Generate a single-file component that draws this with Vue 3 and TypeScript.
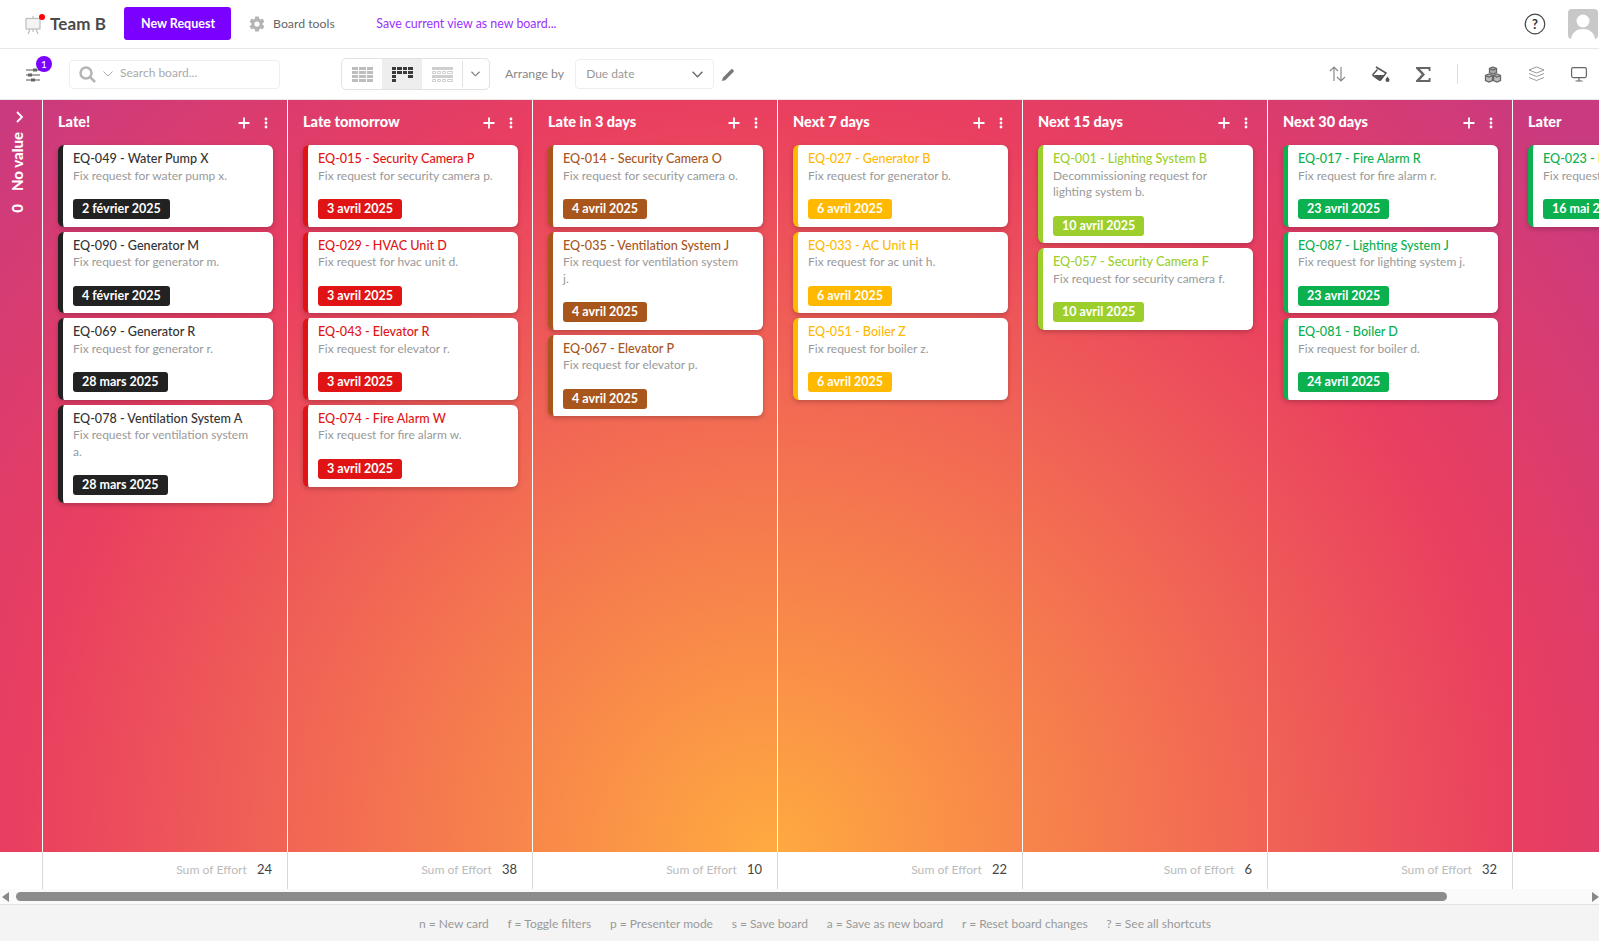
<script setup lang="ts">
interface Card { id: string; desc: string; date: string }
interface Column { title: string; tone: string; sum: number | null; cards: Card[] }

const columns: Column[] = [
  { title: 'Late!', tone: 'black', sum: 24, cards: [
    { id: 'EQ-049 - Water Pump X', desc: 'Fix request for water pump x.', date: '2 février 2025' },
    { id: 'EQ-090 - Generator M', desc: 'Fix request for generator m.', date: '4 février 2025' },
    { id: 'EQ-069 - Generator R', desc: 'Fix request for generator r.', date: '28 mars 2025' },
    { id: 'EQ-078 - Ventilation System A', desc: 'Fix request for ventilation system a.', date: '28 mars 2025' },
  ] },
  { title: 'Late tomorrow', tone: 'red', sum: 38, cards: [
    { id: 'EQ-015 - Security Camera P', desc: 'Fix request for security camera p.', date: '3 avril 2025' },
    { id: 'EQ-029 - HVAC Unit D', desc: 'Fix request for hvac unit d.', date: '3 avril 2025' },
    { id: 'EQ-043 - Elevator R', desc: 'Fix request for elevator r.', date: '3 avril 2025' },
    { id: 'EQ-074 - Fire Alarm W', desc: 'Fix request for fire alarm w.', date: '3 avril 2025' },
  ] },
  { title: 'Late in 3 days', tone: 'brown', sum: 10, cards: [
    { id: 'EQ-014 - Security Camera O', desc: 'Fix request for security camera o.', date: '4 avril 2025' },
    { id: 'EQ-035 - Ventilation System J', desc: 'Fix request for ventilation system j.', date: '4 avril 2025' },
    { id: 'EQ-067 - Elevator P', desc: 'Fix request for elevator p.', date: '4 avril 2025' },
  ] },
  { title: 'Next 7 days', tone: 'yellow', sum: 22, cards: [
    { id: 'EQ-027 - Generator B', desc: 'Fix request for generator b.', date: '6 avril 2025' },
    { id: 'EQ-033 - AC Unit H', desc: 'Fix request for ac unit h.', date: '6 avril 2025' },
    { id: 'EQ-051 - Boiler Z', desc: 'Fix request for boiler z.', date: '6 avril 2025' },
  ] },
  { title: 'Next 15 days', tone: 'lime', sum: 6, cards: [
    { id: 'EQ-001 - Lighting System B', desc: 'Decommissioning request for lighting system b.', date: '10 avril 2025' },
    { id: 'EQ-057 - Security Camera F', desc: 'Fix request for security camera f.', date: '10 avril 2025' },
  ] },
  { title: 'Next 30 days', tone: 'green', sum: 32, cards: [
    { id: 'EQ-017 - Fire Alarm R', desc: 'Fix request for fire alarm r.', date: '23 avril 2025' },
    { id: 'EQ-087 - Lighting System J', desc: 'Fix request for lighting system j.', date: '23 avril 2025' },
    { id: 'EQ-081 - Boiler D', desc: 'Fix request for boiler d.', date: '24 avril 2025' },
  ] },
  { title: 'Later', tone: 'green', sum: null, cards: [
    { id: 'EQ-023 - Lighting System', desc: 'Fix request for lighting system.', date: '16 mai 2025' },
  ] },
]

const shortcuts = [
  'n = New card', 'f = Toggle filters', 'p = Presenter mode', 's = Save board',
  'a = Save as new board', 'r = Reset board changes', '? = See all shortcuts',
]
</script>

<template>
  <div class="app">
    <header class="topbar">
      <svg class="logo" width="18" height="20" viewBox="0 0 18 20" fill="none" stroke="#bdbdbd" stroke-width="1.2">
        <rect x="1" y="3.5" width="14" height="10.5" fill="#f4f4f4" />
        <path d="M8 1v2.5M5 14l-2 5M11 14l2 5M8 14v3" />
      </svg>
      <span class="dot"></span>
      <span class="team">Team B</span>
      <button class="primary">New Request</button>
      <svg class="gear" width="18" height="18" viewBox="0 0 24 24" fill="#b4b4b4">
        <path d="M19.4 13a7.6 7.6 0 0 0 0-2l2.5-1.9-2.4-4.2-3 1.2a7.6 7.6 0 0 0-1.7-1L14.400 1.900H9.600L9.200 5.100a7.600 7.600 0 0 0-1.700 1l-3-1.200-2.400 4.200L4.600 11a7.600 7.600 0 0 0 0 2l-2.500 1.900 2.400 4.200 3-1.200a7.600 7.600 0 0 0 1.700 1l.4 3.200h4.800l.4-3.200a7.600 7.600 0 0 0 1.700-1l3 1.200 2.400-4.200zM12 15.500a3.500 3.500 0 1 1 0-7 3.500 3.500 0 0 1 0 7z" />
      </svg>
      <span class="tools">Board tools</span>
      <a class="save">Save current view as new board...</a>
      <span class="spacer"></span>
      <svg class="help" width="22" height="22" viewBox="0 0 22 22">
        <circle cx="11" cy="11" r="9.800" fill="none" stroke="#444" stroke-width="1.200" />
        <text x="11" y="15.500" text-anchor="middle" class="help-q">?</text>
      </svg>
      <div class="avatar">
        <svg width="30" height="30" viewBox="0 0 30 30" fill="#fff">
          <circle cx="15" cy="12" r="6.500" />
          <path d="M3 30c1-7 6-10 12-10s11 3 12 10z" />
        </svg>
      </div>
    </header>

    <div class="toolbar">
      <div class="filter">
        <svg width="16" height="16" viewBox="0 0 16 16" stroke="#555" stroke-width="1.200">
          <path d="M1 3h14M1 8h14M1 13h14" />
          <path d="M8 3h4M3 8h4M6 13h4" stroke-width="3" stroke="#666" />
        </svg>
        <span class="count">1</span>
      </div>
      <div class="search">
        <svg width="17" height="17" viewBox="0 0 17 17" fill="none" stroke="#b5b5b5" stroke-width="2.500">
          <circle cx="7" cy="7" r="5.500" />
          <path d="M11 11l5 5" />
        </svg>
        <svg class="chev" width="10" height="6" viewBox="0 0 10 6" fill="none" stroke="#aaa" stroke-width="1"><path d="M.500 .500L5 5l4.500-4.500" /></svg>
        <span class="search-text">Search board...</span>
      </div>
      <div class="views">
        <div class="view">
          <svg width="21" height="15" viewBox="0 0 21 15" fill="#bdbdbd"><path d="M0 0h6v3H0zM7 0h7v3H7zM15 0h6v3h-6zM0 4h6v3H0zM7 4h7v3H7zM15 4h6v3h-6zM0 8h6v3H0zM7 8h7v3H7zM15 8h6v3h-6zM0 12h6v3H0zM7 12h7v3H7zM15 12h6v3h-6z" /></svg>
        </div>
        <div class="view active">
          <svg width="21" height="15" viewBox="0 0 21 15" fill="#3a3a3a"><path d="M0 0h4v3H0zM5 0h5v3H5zM11 0h4v3h-4zM16 0h5v3h-5zM0 4h4v3H0zM5 4h5v3H5zM11 4h4v3h-4zM16 4h5v3h-5zM0 8h4v3H0zM16 8h5v3h-5zM0 12h4v3H0z" /></svg>
        </div>
        <div class="view">
          <svg width="21" height="15" viewBox="0 0 21 15" fill="#cfcfcf"><path d="M0 0h21v3H0zM0 8h21v3H0z" /><path d="M.500 4.500h3v2h-3zM5.500 4.500h3v2h-3zM10.500 4.500h3v2h-3zM15.500 4.500h5v2h-5zM.500 12.500h3v2h-3zM5.500 12.500h3v2h-3zM10.500 12.500h3v2h-3zM15.500 12.500h5v2h-5z" fill="none" stroke="#cfcfcf" stroke-width="1" /></svg>
        </div>
        <div class="view-more">
          <svg width="9" height="6" viewBox="0 0 10 6" fill="none" stroke="#777" stroke-width="1.200"><path d="M.500 .500L5 5l4.500-4.500" /></svg>
        </div>
      </div>
      <span class="arrange lift">Arrange by</span>
      <div class="select">
        <span class="lift">Due date</span>
        <svg width="11" height="7" viewBox="0 0 10 6" fill="none" stroke="#666" stroke-width="1.200"><path d="M.500 .500L5 5l4.500-4.500" /></svg>
      </div>
      <svg class="pencil" width="13" height="13" viewBox="0 0 13 13" fill="#777"><path d="M0 13l.800-3.200L9 1.600a1.300 1.300 0 0 1 1.900 0l.5.500a1.300 1.300 0 0 1 0 1.900L3.200 12.200z" /></svg>
      <span class="spacer"></span>
      <div class="tool-icons">
        <svg width="17" height="16" viewBox="0 0 17 16" fill="none" stroke="#8a8a8a" stroke-width="1.200"><path d="M5 15V1M1 5l4-4 4 4M12 1v14M8 11l4 4 4-4" /></svg>
        <svg width="18" height="16" viewBox="0 0 18 16"><path d="M4 1l10 6-5 6.500a1.500 1.500 0 0 1-2 .3L1.500 10a1.500 1.500 0 0 1-.2-2L5.500 3.500" fill="none" stroke="#555" stroke-width="1.500" /><path d="M1.500 9h11.500l-4 5-2 .3z" fill="#555" /><path d="M15.500 10.500c1.300 1.700 2 2.600 2 3.500a2 2 0 0 1-4 0c0-.9.700-1.800 2-3.500z" fill="#555" /></svg>
        <svg width="15" height="15" viewBox="0 0 15 15" fill="#666"><path d="M0 0h14.500v4h-1.500l-.7-2H4l5 5.500-5 5.500h8.300l.7-2h1.500v4H0v-1.500L5.700 7.500 0 1.500z" /></svg>
        <span class="vr"></span>
        <svg width="18" height="17" viewBox="0 0 18 17" stroke="#666" stroke-width="1.300" fill="#aaa"><path d="M9 1l3.500 1.500v4L9 8 5.500 6.500v-4z" /><path d="M5 8l3.500 1.500v5L5 16l-3.500-1.500v-5z" fill="#bbb" /><path d="M13 8l3.500 1.500v5L13 16l-3.500-1.500v-5z" fill="#bbb" /><path d="M5.500 2.500L9 4l3.500-1.500M1.500 9.500L5 11l3.500-1.500M9.500 9.500L13 11l3.500-1.500" fill="none" /></svg>
        <svg width="17" height="16" viewBox="0 0 17 16" fill="none" stroke="#999" stroke-width="1"><path d="M8.500 1l7.500 3-7.500 3L1 4zM1 7.500l7.500 3 7.500-3M1 11.500l7.500 3 7.500-3" /></svg>
        <svg width="16" height="15" viewBox="0 0 16 15" fill="none" stroke="#666" stroke-width="1.200"><rect x=".600" y=".600" width="14.800" height="10" rx="1.500" /><path d="M8 10.600v3M4.500 14h7" /></svg>
      </div>
    </div>

    <main class="board">
      <aside class="novalue">
        <div class="nv-top">
          <svg width="8" height="12" viewBox="0 0 8 12" fill="none" stroke="#fff" stroke-width="1.800"><path d="M1 1l5 5-5 5" /></svg>
          <span class="nv-label"><span class="nv-count">0</span>No value</span>
        </div>
        <div class="nv-foot"></div>
      </aside>
      <section v-for="col in columns" :key="col.title" class="column">
        <div class="col-body">
          <div class="col-head">
            <span class="col-title">{{ col.title }}</span>
            <svg width="12" height="12" viewBox="0 0 12 12" stroke="#fff" stroke-width="1.800"><path d="M6 .500v11M.500 6h11" /></svg>
            <svg class="kebab" width="4" height="12" viewBox="0 0 4 12" fill="#fff"><circle cx="2" cy="2" r="1.400" /><circle cx="2" cy="6" r="1.400" /><circle cx="2" cy="10" r="1.400" /></svg>
          </div>
          <article v-for="card in col.cards" :key="card.id" class="card" :class="col.tone">
            <div class="card-title">{{ card.id }}</div>
            <div class="card-desc">{{ card.desc }}</div>
            <span class="badge">{{ card.date }}</span>
          </article>
        </div>
        <footer class="col-foot">
          <template v-if="col.sum !== null">
            <span class="sum-label">Sum of Effort</span>
            <span class="sum-value">{{ col.sum }}</span>
          </template>
        </footer>
      </section>
    </main>

    <div class="scrollbar">
      <span class="arrow left"></span>
      <span class="track"><span class="thumb"></span></span>
      <span class="arrow right"></span>
    </div>

    <footer class="shortcuts">
      <span v-for="s in shortcuts" :key="s">{{ s }}</span>
    </footer>
  </div>
</template>

<style>
html, body { margin: 0; overflow: hidden; }
</style>

<style scoped>
.app {
  height: 941px;
  width: 1599px;
  display: flex;
  flex-direction: column;
  font-family: "Lato", "Open Sans", sans-serif;
  color: #444;
  background: #fff;
  overflow: hidden;
}
.spacer { flex: 1; }
.lift { padding-bottom: 2px; }

.topbar {
  height: 48px;
  flex: none;
  display: flex;
  align-items: center;
  border-bottom: 1px solid #e8e8e8;
  position: relative;
}
.logo { margin-left: 25px; margin-top: 2px; }
.dot {
  position: absolute;
  left: 39px;
  top: 14px;
  width: 6px;
  height: 6px;
  border-radius: 50%;
  background: #f00;
}
.team { margin-left: 7px; padding-bottom: 2px; font-size: 17px; font-weight: 700; color: #4a4a4a; letter-spacing: .1px; }
.primary {
  margin-left: 18px;
  margin-bottom: 2px;
  width: 107px;
  height: 33px;
  border: 0;
  border-radius: 3px;
  background: #7a00ff;
  color: #fff;
  font: 700 12.500px "Lato", sans-serif;
  padding: 0 0 0 1px;
}
.gear { margin-left: 17px; }
.tools { margin-left: 7px; font-size: 12.300px; color: #666; padding-bottom: 2px; }
.save { margin-left: 41.500px; font-size: 12.400px; color: #9a30ff; padding-bottom: 2px; }
.help { margin-right: 22px; }
.help-q { font: 700 13px "Lato", sans-serif; fill: #333; }
.avatar {
  width: 30px;
  height: 30px;
  margin-right: 1px;
  background: #c8c8c8;
  border-radius: 4px;
  overflow: hidden;
}
.avatar svg { display: block; }

.toolbar {
  height: 51px;
  flex: none;
  display: flex;
  align-items: center;
  box-sizing: border-box;
  border-bottom: 1px solid #e8e8e8;
}
.filter { margin-left: 25px; position: relative; width: 16px; height: 16px; margin-top: 2px; }
.count {
  position: absolute;
  left: 11px;
  top: -11px;
  width: 16px;
  height: 16px;
  border-radius: 50%;
  background: #7a00ff;
  color: #fff;
  font-size: 10px;
  line-height: 16px;
  text-align: center;
}
.search {
  margin-left: 28px;
  width: 211px;
  height: 29px;
  box-sizing: border-box;
  border: 1px solid #eee;
  border-radius: 4px;
  display: flex;
  align-items: center;
  padding-left: 9px;
  font-size: 12px;
  color: #aaa;
}
.search-text { padding-bottom: 3px; }
.chev { margin: 0 7px 0 7px; }
.views {
  margin-left: 61px;
  width: 149px;
  height: 32px;
  box-sizing: border-box;
  border: 1px solid #e2e2e2;
  border-radius: 5px;
  display: flex;
  overflow: hidden;
}
.view { width: 40px; display: flex; align-items: center; justify-content: center; }
.view.active { background: #eee; }
.view-more { flex: 1; display: flex; align-items: center; justify-content: center; position: relative; }
.view-more::before {
  content: "";
  position: absolute;
  left: 0;
  top: 2px;
  bottom: 2px;
  border-left: 1px solid #e2e2e2;
}
.arrange { margin-left: 15px; font-size: 12.300px; color: #888; }
.select {
  margin-left: 11px;
  width: 139px;
  height: 30px;
  box-sizing: border-box;
  border: 1px solid #eee;
  border-radius: 4px;
  display: flex;
  align-items: center;
  justify-content: space-between;
  padding: 0 10px;
  font-size: 12px;
  color: #999;
}
.pencil { margin-left: 8px; }
.tool-icons { display: flex; align-items: center; margin-right: 12px; gap: 26px; }
.vr { width: 1px; height: 20px; background: #ddd; }

.board {
  flex: 1;
  min-height: 0;
  display: flex;
  overflow: hidden;
  background: radial-gradient(circle 1075px at 770px 752px, #ffaa40 0, #e93e60 70%, #c93a80 100%);
}
.novalue { width: 42px; flex: none; display: flex; flex-direction: column; }
.nv-top {
  flex: 1;
  display: flex;
  flex-direction: column;
  align-items: center;
  padding-top: 11px;
  color: #fff;
  font-weight: 900;
  font-size: 15px;
}
.nv-top svg { margin-right: 3px; }
.nv-label {
  writing-mode: vertical-rl;
  transform: rotate(180deg);
  margin-top: 9px;
  margin-right: 9px;
  white-space: nowrap;
}
.nv-count { display: inline-block; margin-bottom: 13px; }
.nv-foot { height: 37px; background: #fff; }
.column { width: 245px; flex: none; display: flex; flex-direction: column; }
.col-body {
  flex: 1;
  min-height: 0;
  box-sizing: border-box;
  border-left: 1px solid #fff;
  padding: 0 14px 0 15px;
}
.col-head { height: 45px; display: flex; align-items: center; color: #fff; }
.col-title { flex: 1; font-size: 14.500px; font-weight: 900; margin-top: -3px; }
.kebab { margin: 0 5px 0 14px; }
.card {
  box-sizing: border-box;
  background: #fff;
  border-radius: 6px;
  border-left: 5px solid;
  padding: 5px 10px 7.670px;
  margin-bottom: 5px;
  box-shadow: 0 2px 5px rgba(0, 0, 0, .22);
  width: 215px;
}
.card-title { font-size: 12.600px; line-height: 17.500px; font-weight: 500; white-space: nowrap; }
.card-desc { font-size: 12px; line-height: 16.500px; color: #999; padding-right: 8px; }
.badge {
  display: inline-block;
  height: 20px;
  line-height: 20px;
  margin-top: 15px;
  padding: 0 9px;
  border-radius: 3px;
  color: #fff;
  font-size: 12.500px;
  font-weight: 700;
  vertical-align: top;
  white-space: nowrap;
}
.black { border-color: #222; }
.black .card-title { color: #333; }
.black .badge { background: #222; }
.red { border-color: #e01414; }
.red .card-title { color: #e01414; }
.red .badge { background: #e01414; }
.brown { border-color: #a8561c; }
.brown .card-title { color: #a8561c; }
.brown .badge { background: #a8561c; }
.yellow { border-color: #ffb900; }
.yellow .card-title { color: #ffb900; }
.yellow .badge { background: #ffb900; }
.lime { border-color: #9ccf2c; }
.lime .card-title { color: #9ccf2c; }
.lime .badge { background: #9ccf2c; }
.green { border-color: #0bb04f; }
.green .card-title { color: #0bb04f; }
.green .badge { background: #0bb04f; }
.col-foot {
  height: 37px;
  flex: none;
  box-sizing: border-box;
  background: #fff;
  border-left: 1px solid #d8d8d8;
  display: flex;
  align-items: center;
  justify-content: flex-end;
  padding: 0 15px 3px 0;
  font-size: 12.200px;
}
.sum-label { color: #bbb; }
.sum-value { margin-left: 10px; color: #444; font-size: 13px; }

.scrollbar {
  height: 16px;
  flex: none;
  box-sizing: border-box;
  background: #fafafa;
  display: flex;
  align-items: center;
  border-bottom: 1px solid #e2e2e2;
  position: relative;
}
.arrow { width: 0; height: 0; border-top: 5px solid transparent; border-bottom: 5px solid transparent; }
.arrow.left { margin-left: 2px; border-right: 7px solid #888; }
.arrow.right { margin-right: 0; border-left: 7px solid #888; }
.track { flex: 1; padding-left: 7px; }
.thumb { display: block; width: 1431px; height: 9px; border-radius: 5px; background: #8c8c8c; }

.shortcuts {
  flex: none;
  height: 36px;
  box-sizing: border-box;
  background: #f4f4f4;
  display: flex;
  align-items: center;
  justify-content: center;
  gap: 18.700px;
  font-size: 12px;
  color: #999;
  padding: 1px 0 0 31px;
}
</style>
